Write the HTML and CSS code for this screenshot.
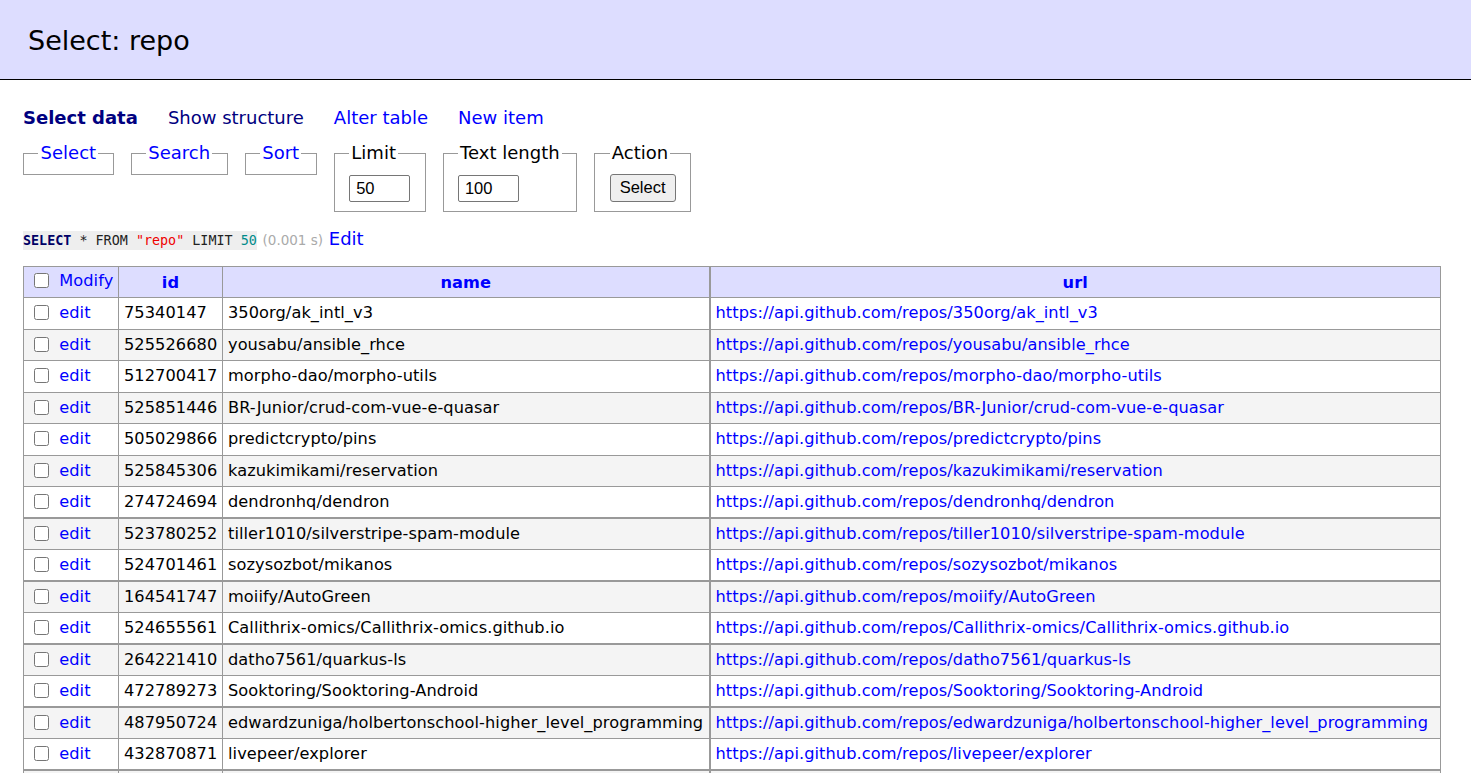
FILE: index.html
```html
<!DOCTYPE html>
<html lang="en">
<head>
<meta charset="utf-8">
<title>Select: repo</title>
<link rel="stylesheet" href="styles.css">
</head>
<body>
<h2 class="page-title">Select: repo</h2>
<div class="content">
  <p class="links">
    <a class="active" href="#">Select data</a>
    <a class="visited" href="#">Show structure</a>
    <a href="#">Alter table</a>
    <a href="#">New item</a>
  </p>
  <form class="select-form">
    <fieldset class="fs"><legend><a href="#">Select</a></legend></fieldset>
    <fieldset class="fs"><legend><a href="#">Search</a></legend></fieldset>
    <fieldset class="fs"><legend><a href="#">Sort</a></legend></fieldset>
    <fieldset class="fs"><legend>Limit</legend><input class="num" type="text" value="50"></fieldset>
    <fieldset class="fs"><legend>Text length</legend><input class="num" type="text" value="100"></fieldset>
    <fieldset class="fs"><legend>Action</legend><button class="btn" type="button">Select</button></fieldset>
  </form>
  <p class="sql"><code class="code"><span class="kw">SELECT</span> * FROM <span class="str">"repo"</span> LIMIT <span class="n">50</span></code> <span class="time">(0.001 s)</span> <a href="#">Edit</a></p>
  <table class="grid">
    <colgroup>
      <col class="c-mod"><col class="c-id"><col class="c-name"><col class="c-url">
    </colgroup>
    <thead>
      <tr>
        <td class="mod"><input class="cb" type="checkbox"> <a href="#">Modify</a></td>
        <th><a href="#">id</a></th>
        <th><a href="#">name</a></th>
        <th class="u"><a href="#">url</a></th>
      </tr>
    </thead>
    <tbody>
      <tr><td class="mod"><input class="cb" type="checkbox"> <a href="#">edit</a></td><td>75340147</td><td>350org/ak_intl_v3</td><td class="u"><a href="#">https://api.github.com/repos/350org/ak_intl_v3</a></td></tr>
      <tr><td class="mod"><input class="cb" type="checkbox"> <a href="#">edit</a></td><td>525526680</td><td>yousabu/ansible_rhce</td><td class="u"><a href="#">https://api.github.com/repos/yousabu/ansible_rhce</a></td></tr>
      <tr><td class="mod"><input class="cb" type="checkbox"> <a href="#">edit</a></td><td>512700417</td><td>morpho-dao/morpho-utils</td><td class="u"><a href="#">https://api.github.com/repos/morpho-dao/morpho-utils</a></td></tr>
      <tr><td class="mod"><input class="cb" type="checkbox"> <a href="#">edit</a></td><td>525851446</td><td>BR-Junior/crud-com-vue-e-quasar</td><td class="u"><a href="#">https://api.github.com/repos/BR-Junior/crud-com-vue-e-quasar</a></td></tr>
      <tr><td class="mod"><input class="cb" type="checkbox"> <a href="#">edit</a></td><td>505029866</td><td>predictcrypto/pins</td><td class="u"><a href="#">https://api.github.com/repos/predictcrypto/pins</a></td></tr>
      <tr><td class="mod"><input class="cb" type="checkbox"> <a href="#">edit</a></td><td>525845306</td><td>kazukimikami/reservation</td><td class="u"><a href="#">https://api.github.com/repos/kazukimikami/reservation</a></td></tr>
      <tr><td class="mod"><input class="cb" type="checkbox"> <a href="#">edit</a></td><td>274724694</td><td>dendronhq/dendron</td><td class="u"><a href="#">https://api.github.com/repos/dendronhq/dendron</a></td></tr>
      <tr class="thick"><td class="mod"><input class="cb" type="checkbox"> <a href="#">edit</a></td><td>523780252</td><td>tiller1010/silverstripe-spam-module</td><td class="u"><a href="#">https://api.github.com/repos/tiller1010/silverstripe-spam-module</a></td></tr>
      <tr><td class="mod"><input class="cb" type="checkbox"> <a href="#">edit</a></td><td>524701461</td><td>sozysozbot/mikanos</td><td class="u"><a href="#">https://api.github.com/repos/sozysozbot/mikanos</a></td></tr>
      <tr class="thick"><td class="mod"><input class="cb" type="checkbox"> <a href="#">edit</a></td><td>164541747</td><td>moiify/AutoGreen</td><td class="u"><a href="#">https://api.github.com/repos/moiify/AutoGreen</a></td></tr>
      <tr><td class="mod"><input class="cb" type="checkbox"> <a href="#">edit</a></td><td>524655561</td><td>Callithrix-omics/Callithrix-omics.github.io</td><td class="u"><a href="#">https://api.github.com/repos/Callithrix-omics/Callithrix-omics.github.io</a></td></tr>
      <tr class="thick"><td class="mod"><input class="cb" type="checkbox"> <a href="#">edit</a></td><td>264221410</td><td>datho7561/quarkus-ls</td><td class="u"><a href="#">https://api.github.com/repos/datho7561/quarkus-ls</a></td></tr>
      <tr><td class="mod"><input class="cb" type="checkbox"> <a href="#">edit</a></td><td>472789273</td><td>Sooktoring/Sooktoring-Android</td><td class="u"><a href="#">https://api.github.com/repos/Sooktoring/Sooktoring-Android</a></td></tr>
      <tr class="thick"><td class="mod"><input class="cb" type="checkbox"> <a href="#">edit</a></td><td>487950724</td><td>edwardzuniga/holbertonschool-higher_level_programming</td><td class="u"><a href="#">https://api.github.com/repos/edwardzuniga/holbertonschool-higher_level_programming</a></td></tr>
      <tr><td class="mod"><input class="cb" type="checkbox"> <a href="#">edit</a></td><td>432870871</td><td>livepeer/explorer</td><td class="u"><a href="#">https://api.github.com/repos/livepeer/explorer</a></td></tr>
      <tr class="thick"><td class="mod">&nbsp;</td><td>&nbsp;</td><td>&nbsp;</td><td class="u">&nbsp;</td></tr>
    </tbody>
  </table>
</div>
</body>
</html>
```

FILE: styles.css
```css
html, body {
  margin: 0;
  padding: 0;
  background: #fff;
}

body {
  color: #000;
  font: 18px/1.25 "DejaVu Sans", Verdana, sans-serif;
}

a {
  color: #00f;
  text-decoration: none;
}

.page-title {
  margin: 0;
  padding: 24px 28px 21px;
  font-size: 27px;
  line-height: 34px;
  font-weight: normal;
  color: #000;
  background: #ddf;
  border-bottom: 1px solid #000;
}

.content {
  padding: 0 20px 20px 23px;
}

.links {
  margin: 27px 0 0;
  display: flex;
  gap: 30px;
  line-height: 22px;
}

.links .active {
  font-weight: bold;
  color: #000080;
}

.links .visited {
  color: #000080;
}

.select-form {
  display: flex;
  align-items: flex-start;
  gap: 17px;
  margin: 13px 0 0;
}

.fs {
  margin: 0;
  padding: 0 14.4px 9px;
  border: 1px solid #999;
  min-width: 0;
}

.fs legend {
  padding: 0 2.2px;
  line-height: 22.5px;
}

.num {
  box-sizing: border-box;
  width: 61px;
  height: 27px;
  margin: 10px 0 0;
  padding: 1px 6px;
  border: 1px solid #767676;
  border-radius: 2px;
  font: 16.5px "Liberation Sans", Arial, sans-serif;
  color: #000;
  display: block;
}

.btn {
  display: block;
  box-sizing: border-box;
  width: 66px;
  height: 28px;
  margin: 9px 0 0;
  padding: 0;
  border: 1px solid #767676;
  border-radius: 3px;
  background: #efefef;
  font: 16.5px "Liberation Sans", Arial, sans-serif;
  color: #000;
}

.sql {
  margin: 16px 0 0;
  line-height: 22px;
}

.code {
  font: 13.4px "DejaVu Sans Mono", monospace;
  background: #eee;
  color: #222;
  padding: 2px 0;
}

.code .kw {
  font-weight: bold;
  color: #000066;
}

.code .str {
  color: #e00;
}

.code .n {
  color: #008b8b;
}

.time {
  font-size: 13.5px;
  color: #aaa;
}

.grid {
  margin: 15px 0 0;
  border-collapse: collapse;
  table-layout: fixed;
  width: 1417px;
  font-size: 16.2px;
  line-height: 20px;
  letter-spacing: 0.07px;
}

.c-mod { width: 95px; }
.c-id { width: 104px; }
.c-name { width: 487px; }
.c-url { width: 731px; }

.grid td,
.grid th {
  border: 1px solid #999;
  padding: 3px 5px;
  white-space: nowrap;
  overflow: hidden;
  text-align: left;
}

.grid tr {
  height: 31.5px;
}

.grid thead td,
.grid thead th {
  background: #ddf;
}

.grid thead th {
  text-align: center;
  font-weight: bold;
  padding-top: 5px;
}

.grid thead .mod {
  vertical-align: top;
  padding-top: 4px;
}

.grid .u {
  border-left: 2px solid #999;
}

.grid tbody tr:nth-child(2n) {
  background: #f4f4f4;
}

.grid tr.thick td {
  border-top: 2px solid #999;
}

.cb {
  width: 15px;
  height: 15px;
  margin: 0 5px 0 5px;
  vertical-align: -2px;
}
```
